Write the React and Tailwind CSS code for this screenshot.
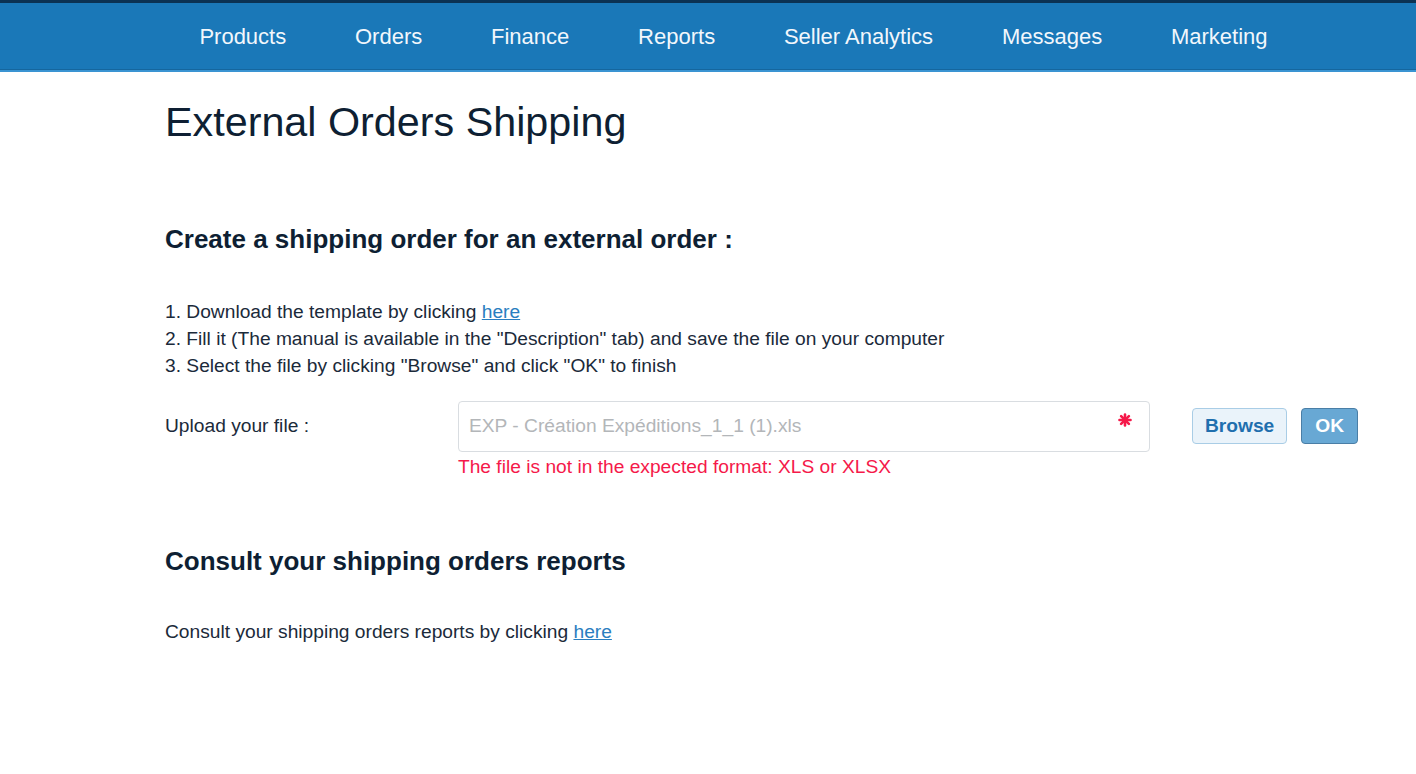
const navItems = ['Products', 'Orders', 'Finance', 'Reports', 'Seller Analytics', 'Messages', 'Marketing']

function Asterisk() {
  return (
    <svg width="14" height="14" viewBox="0 0 14 14" className="text-[#f5194a]">
      <g stroke="currentColor" strokeWidth="2.6" strokeLinecap="round">
        <line x1="7" y1="1.5" x2="7" y2="12.5" />
        <line x1="1.5" y1="7" x2="12.5" y2="7" />
        <line x1="3.1" y1="3.1" x2="10.9" y2="10.9" />
        <line x1="10.9" y1="3.1" x2="3.1" y2="10.9" />
      </g>
    </svg>
  )
}

export default function App() {
  return (
    <div className="min-h-screen bg-white text-[#1b2a3a]" style={{ fontFamily: '"Liberation Sans", Arial, sans-serif' }}>
      {/* Top nav */}
      <header className="border-t-[3px] border-[#0b3253] bg-[#1a78b8]">
        <nav className="flex h-[66px] items-center pl-[165px]">
          {navItems.map((item) => (
            <a key={item} href="#" className="px-[34.4px] text-[22px] text-[#f2f7fc]">
              {item}
            </a>
          ))}
        </nav>
        <div className="h-px bg-[#15669e]" />
        <div className="h-[2px] bg-[#3a94d2]" />
      </header>

      <main className="pl-[165px] pr-[58px]">
        <h1 className="pt-[26px] text-[41.3px] leading-[48px] text-[#0e1f33]">External Orders Shipping</h1>

        <h2 className="mt-[78px] text-[26px] font-bold leading-[30px] text-[#0e1f33]">
          Create a shipping order for an external order :
        </h2>

        <ol className="mt-[44px] text-[19.2px] leading-[27px] text-[#1b2a3a]">
          <li>
            1. Download the template by clicking{' '}
            <a href="#" className="text-[#2a7ec0] underline">here</a>
          </li>
          <li>2. Fill it (The manual is available in the "Description" tab) and save the file on your computer</li>
          <li>3. Select the file by clicking "Browse" and click "OK" to finish</li>
        </ol>

        <div className="mt-[22px] flex items-start">
          <label className="w-[293px] pt-[13px] text-[19.2px] leading-[24px]">Upload your file :</label>
          <div className="w-[692px]">
            <div className="relative flex h-[51px] items-center rounded border border-[#d9dde1] px-[10px]">
              <span className="text-[19.2px] text-[#b3b6b9]">EXP - Création Expéditions_1_1 (1).xls</span>
              <span className="absolute right-[17px] top-[11px]">
                <Asterisk />
              </span>
            </div>
            <p className="mt-[3px] text-[19.2px] leading-[24px] text-[#f5194a]">
              The file is not in the expected format: XLS or XLSX
            </p>
          </div>
          <div className="ml-[42px] mt-[7px] flex gap-[14px]">
            <button className="h-[36px] rounded border border-[#a9cde6] bg-[#eaf3fa] px-[12px] text-[19.2px] font-bold text-[#1f6fae]">
              Browse
            </button>
            <button className="h-[36px] rounded border border-[#4a7ea6] bg-[#68a8d4] px-[13px] text-[19.2px] font-bold text-white">
              OK
            </button>
          </div>
        </div>

        <h2 className="mt-[67px] text-[26px] font-bold leading-[30px] text-[#0e1f33]">
          Consult your shipping orders reports
        </h2>

        <p className="mt-[42px] text-[19.2px] leading-[27px]">
          Consult your shipping orders reports by clicking{' '}
          <a href="#" className="text-[#2a7ec0] underline">here</a>
        </p>
      </main>
    </div>
  )
}
